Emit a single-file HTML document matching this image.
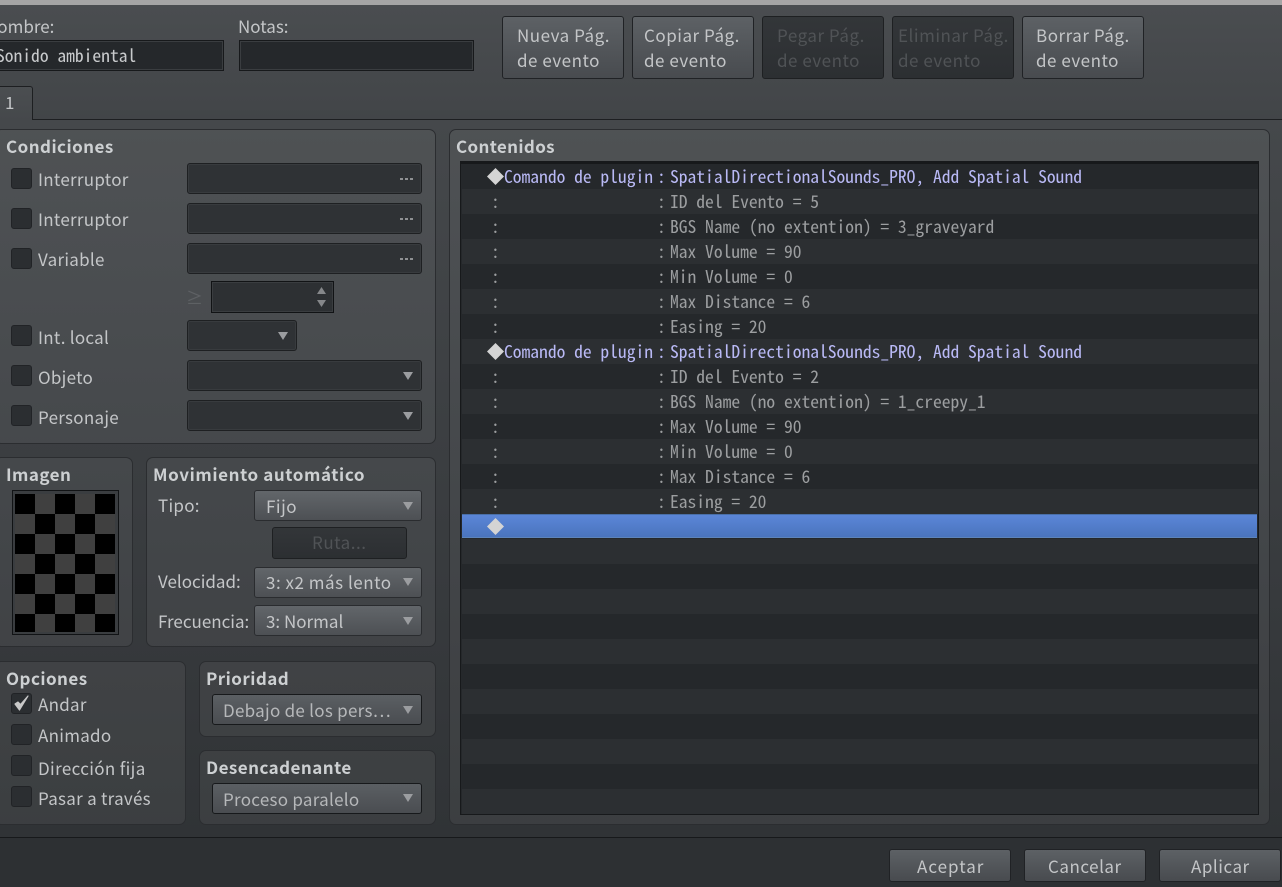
<!DOCTYPE html>
<html><head><meta charset="utf-8"><style>
html,body{margin:0;padding:0;width:1282px;height:887px;overflow:hidden;background:#2d3033}
*{box-sizing:border-box}
body{position:relative;font-family:"Noto Sans CJK JP","DejaVu Sans",sans-serif;font-size:17px;color:#c4c6c8}
div,span.t{position:absolute}
.t{white-space:nowrap;line-height:24px;height:24px;margin-top:-1px;letter-spacing:.27px}
.w{letter-spacing:.52px}
.n{letter-spacing:0}
.z{margin-top:0}
.b{font-weight:700;font-size:17px;color:#cdd0d2;letter-spacing:.45px;margin-top:0}
.panel{border:1px solid #2b2d30;border-radius:7px;background:rgba(255,255,255,.055)}
.chk{width:21px;height:21px;left:11px;margin-top:1px;background:#2b2e31;border:1px solid #212326;border-radius:3px}
.combo{background:#2f3235;border:1px solid #1e2022;box-shadow:inset 0 0 0 1px #383b3e;border-radius:3px}
.sel{background:linear-gradient(#62666a,#4d5054);border:1px solid #2a2c2f;border-radius:3px}
.sel2{background:linear-gradient(#5b5f63,#4a4d51);border:1px solid #17191b;border-radius:3px}
.arr{width:10px;height:8px;margin:0 0 0 1px;background:#9b9da0;clip-path:polygon(0 0,100% 0,50% 100%)}
.dots{left:400px;width:13px;height:2px;background:repeating-linear-gradient(90deg,#8f9193 0 3px,transparent 3px 5px)}
.btn{background:linear-gradient(#5d6165,#484b4f);border:1px solid #202225;border-radius:3px}
.btnd{background:linear-gradient(#333639,#2c2f32);border:1px solid #1e2022;border-radius:3px}
.rows{left:462px;top:164px;width:796px;height:650px;background:repeating-linear-gradient(#25282b 0 25px,#2c2f32 25px 50px)}
.m{font-family:"Noto Sans Mono CJK JP","Liberation Mono",monospace;font-size:17.55px;line-height:25px;height:25px;margin-top:0;position:absolute;white-space:pre;color:#9c9ea0}
.l{color:#b9b9f5}
.dia{width:17px;height:17px;left:487px;background:#d4d4d4;clip-path:polygon(50% 0,100% 50%,50% 100%,0 50%)}
</style></head><body>
<div style="left:0;top:0;width:1282px;height:5px;background:#a5a5a5"></div>
<div style="left:0;top:5px;width:1282px;height:115px;background:linear-gradient(#4a4d50,#424548)"></div>

<span class="t n" style="left:-15px;top:15px">Nombre:</span>
<span class="t n" style="left:238px;top:15px">Notas:</span>
<div style="left:-5px;top:40px;width:229px;height:31px;background:#25282b;border:1px solid #17191b;box-shadow:inset 0 0 0 1px #3a3d40"></div>
<div style="left:239px;top:40px;width:235px;height:31px;background:#25282b;border:1px solid #17191b;box-shadow:inset 0 0 0 1px #3a3d40"></div>
<div class="m" style="left:-4px;top:43px;color:#c8cacc">Sonido ambiental</div>

<div class="btn" style="left:502px;top:16px;width:122px;height:63px"></div>
<div class="btn" style="left:632px;top:16px;width:122px;height:63px"></div>
<div class="btnd" style="left:762px;top:16px;width:122px;height:63px"></div>
<div class="btnd" style="left:892px;top:16px;width:122px;height:63px"></div>
<div class="btn" style="left:1022px;top:16px;width:122px;height:63px"></div>
<span class="t w z" style="left:517px;top:23px">Nueva Pág.</span><span class="t w z" style="left:517px;top:48px">de evento</span>
<span class="t w z" style="left:644px;top:23px">Copiar Pág.</span><span class="t w z" style="left:644px;top:48px">de evento</span>
<span class="t w z" style="left:777px;top:23px;color:#505356">Pegar Pág.</span><span class="t w z" style="left:777px;top:48px;color:#505356">de evento</span>
<span class="t w z" style="left:898px;top:23px;color:#505356">Eliminar Pág.</span><span class="t w z" style="left:898px;top:48px;color:#505356">de evento</span>
<span class="t w z" style="left:1036px;top:23px">Borrar Pág.</span><span class="t w z" style="left:1036px;top:48px">de evento</span>

<div style="left:0;top:120px;width:1282px;height:717px;background:linear-gradient(#45484b,#303336)"></div>
<div style="left:0;top:119px;width:1282px;height:1px;background:#1d1f21"></div>
<div style="left:-3px;top:86px;width:36px;height:34px;background:linear-gradient(#4b4e51,#45484b);border:1px solid #1d1f21;border-bottom:none;border-radius:3px 3px 0 0"></div>
<span class="t" style="left:5px;top:91px">1</span>

<!-- Condiciones -->
<div class="panel" style="left:-6px;top:129px;width:442px;height:315px"></div>
<span class="t b" style="left:6px;top:134px">Condiciones</span>
<div class="chk" style="top:167px"></div><span class="t z" style="left:38px;top:167px">Interruptor</span>
<div class="combo" style="left:187px;top:163px;width:235px;height:31px"></div><div class="dots" style="top:178px"></div>
<div class="chk" style="top:207px"></div><span class="t z" style="left:38px;top:207px">Interruptor</span>
<div class="combo" style="left:187px;top:203px;width:235px;height:31px"></div><div class="dots" style="top:218px"></div>
<div class="chk" style="top:247px"></div><span class="t z" style="left:38px;top:247px">Variable</span>
<div class="combo" style="left:187px;top:243px;width:235px;height:31px"></div><div class="dots" style="top:258px"></div>
<span class="t" style="left:186px;top:286px;color:#5e6164">≥</span>
<div style="left:211px;top:281px;width:123px;height:32px;background:#2d3033;border:1px solid #111315;box-shadow:inset 0 0 0 1px #3a3d40"></div>
<div class="arr" style="left:316px;top:287px;width:9px;height:7px;transform:scaleY(-1);background:#85878a"></div>
<div class="arr" style="left:316px;top:300px;width:9px;height:7px;background:#85878a"></div>
<div class="chk" style="top:324px"></div><span class="t z" style="left:38px;top:325px">Int. local</span>
<div class="combo" style="left:187px;top:320px;width:110px;height:31px"></div><div class="arr" style="left:277px;top:332px"></div>
<div class="chk" style="top:364px"></div><span class="t z" style="left:38px;top:365px">Objeto</span>
<div class="combo" style="left:187px;top:360px;width:235px;height:31px"></div><div class="arr" style="left:402px;top:372px"></div>
<div class="chk" style="top:404px"></div><span class="t z" style="left:38px;top:405px">Personaje</span>
<div class="combo" style="left:187px;top:400px;width:235px;height:31px"></div><div class="arr" style="left:402px;top:412px"></div>

<!-- Imagen -->
<div class="panel" style="left:-6px;top:457px;width:139px;height:190px"></div>
<span class="t b" style="left:6px;top:462px">Imagen</span>
<div style="left:12px;top:490px;width:107px;height:145px;background:#3a3d40;border:1px solid #111315"></div>
<div style="left:15px;top:494px;width:100px;height:138px;background:conic-gradient(#404040 25%,#000 0 50%,#404040 0 75%,#000 0) 0 0/40px 40px"></div>

<!-- Movimiento -->
<div class="panel" style="left:146px;top:457px;width:290px;height:190px"></div>
<span class="t b" style="left:153px;top:462px;letter-spacing:.6px">Movimiento automático</span>
<span class="t z" style="left:158px;top:493px">Tipo:</span>
<div class="sel" style="left:254px;top:490px;width:168px;height:31px"></div><span class="t w" style="left:266px;top:495px">Fijo</span><div class="arr" style="left:402px;top:502px"></div>
<div class="btnd" style="left:272px;top:527px;width:135px;height:32px"></div><span class="t w" style="left:312px;top:531px;color:#505356">Ruta...</span>
<span class="t n" style="left:158px;top:570px">Velocidad:</span>
<div class="sel" style="left:254px;top:567px;width:168px;height:31px"></div><span class="t w" style="left:266px;top:571px">3: x2 más lento</span><div class="arr" style="left:402px;top:578px"></div>
<span class="t n z" style="left:158px;top:609px">Frecuencia:</span>
<div class="sel" style="left:254px;top:605px;width:168px;height:31px"></div><span class="t n" style="left:266px;top:610px">3: Normal</span><div class="arr" style="left:402px;top:617px"></div>

<!-- Opciones -->
<div class="panel" style="left:-6px;top:661px;width:192px;height:164px"></div>
<span class="t b" style="left:6px;top:666px">Opciones</span>
<div class="chk" style="top:692px"></div>
<svg style="position:absolute;left:13px;top:694px" width="17" height="18" viewBox="0 0 17 18"><path d="M2 10 L6.5 16 L15 2 L7.5 10.5 L5 8 Z" fill="#c8c8c8" stroke="#c8c8c8" stroke-width="1.2" stroke-linejoin="round"/></svg>
<span class="t z" style="left:38px;top:692px">Andar</span>
<div class="chk" style="top:723px"></div><span class="t" style="left:38px;top:724px">Animado</span>
<div class="chk" style="top:754px"></div><span class="t z" style="left:38px;top:756px;letter-spacing:.35px">Dirección fija</span>
<div class="chk" style="top:785px"></div><span class="t z" style="left:38px;top:786px">Pasar a través</span>

<!-- Prioridad -->
<div class="panel" style="left:199px;top:661px;width:237px;height:76px"></div>
<span class="t b" style="left:206px;top:666px">Prioridad</span>
<div class="sel2" style="left:212px;top:694px;width:210px;height:31px"></div><span class="t" style="left:223px;top:699px;color:#b6b8ba">Debajo de los pers⋯</span><div class="arr" style="left:402px;top:706px"></div>
<div class="panel" style="left:199px;top:750px;width:237px;height:75px"></div>
<span class="t b" style="left:206px;top:755px">Desencadenante</span>
<div class="sel2" style="left:212px;top:783px;width:210px;height:31px"></div><span class="t" style="left:223px;top:788px;color:#b6b8ba">Proceso paralelo</span><div class="arr" style="left:402px;top:794px"></div>

<!-- Contenidos -->
<div class="panel" style="left:449px;top:129px;width:821px;height:696px"></div>
<span class="t b" style="left:456px;top:134px;letter-spacing:.35px">Contenidos</span>
<div style="left:460px;top:161px;width:799px;height:654px;background:#25282b;border:1px solid #17191b;border-top-width:3px"></div>
<div class="rows"></div>
<div style="left:462px;top:514px;width:795px;height:24px;background:linear-gradient(#5b86d8,#4a74bd);border-top:1px solid #4a6fa8;border-bottom:1px solid #5d84ba"></div>

<div class="dia" style="top:168px"></div>
<div class="m l" style="left:504px;top:164px">Comando de plugin</div><div class="m l" style="left:657px;top:164px">:</div><div class="m l" style="left:670px;top:164px">SpatialDirectionalSounds_PRO, Add Spatial Sound</div>
<div class="m" style="left:491px;top:189px">:</div><div class="m" style="left:657px;top:189px">:</div><div class="m" style="left:670px;top:189px">ID del Evento = 5</div>
<div class="m" style="left:491px;top:214px">:</div><div class="m" style="left:657px;top:214px">:</div><div class="m" style="left:670px;top:214px">BGS Name (no extention) = 3_graveyard</div>
<div class="m" style="left:491px;top:239px">:</div><div class="m" style="left:657px;top:239px">:</div><div class="m" style="left:670px;top:239px">Max Volume = 90</div>
<div class="m" style="left:491px;top:264px">:</div><div class="m" style="left:657px;top:264px">:</div><div class="m" style="left:670px;top:264px">Min Volume = 0</div>
<div class="m" style="left:491px;top:289px">:</div><div class="m" style="left:657px;top:289px">:</div><div class="m" style="left:670px;top:289px">Max Distance = 6</div>
<div class="m" style="left:491px;top:314px">:</div><div class="m" style="left:657px;top:314px">:</div><div class="m" style="left:670px;top:314px">Easing = 20</div>
<div class="dia" style="top:343px"></div>
<div class="m l" style="left:504px;top:339px">Comando de plugin</div><div class="m l" style="left:657px;top:339px">:</div><div class="m l" style="left:670px;top:339px">SpatialDirectionalSounds_PRO, Add Spatial Sound</div>
<div class="m" style="left:491px;top:364px">:</div><div class="m" style="left:657px;top:364px">:</div><div class="m" style="left:670px;top:364px">ID del Evento = 2</div>
<div class="m" style="left:491px;top:389px">:</div><div class="m" style="left:657px;top:389px">:</div><div class="m" style="left:670px;top:389px">BGS Name (no extention) = 1_creepy_1</div>
<div class="m" style="left:491px;top:414px">:</div><div class="m" style="left:657px;top:414px">:</div><div class="m" style="left:670px;top:414px">Max Volume = 90</div>
<div class="m" style="left:491px;top:439px">:</div><div class="m" style="left:657px;top:439px">:</div><div class="m" style="left:670px;top:439px">Min Volume = 0</div>
<div class="m" style="left:491px;top:464px">:</div><div class="m" style="left:657px;top:464px">:</div><div class="m" style="left:670px;top:464px">Max Distance = 6</div>
<div class="m" style="left:491px;top:489px">:</div><div class="m" style="left:657px;top:489px">:</div><div class="m" style="left:670px;top:489px">Easing = 20</div>
<div class="dia" style="top:518px"></div>

<!-- bottom -->
<div style="left:0;top:837px;width:1282px;height:1px;background:#17191b"></div>
<div class="btn" style="left:889px;top:849px;width:122px;height:33px"></div><span class="t z" style="left:917px;top:854px;letter-spacing:1px">Aceptar</span>
<div class="btn" style="left:1024px;top:849px;width:122px;height:33px"></div><span class="t w z" style="left:1048px;top:854px">Cancelar</span>
<div class="btn" style="left:1159px;top:849px;width:122px;height:33px"></div><span class="t w z" style="left:1191px;top:854px">Aplicar</span>
</body></html>
